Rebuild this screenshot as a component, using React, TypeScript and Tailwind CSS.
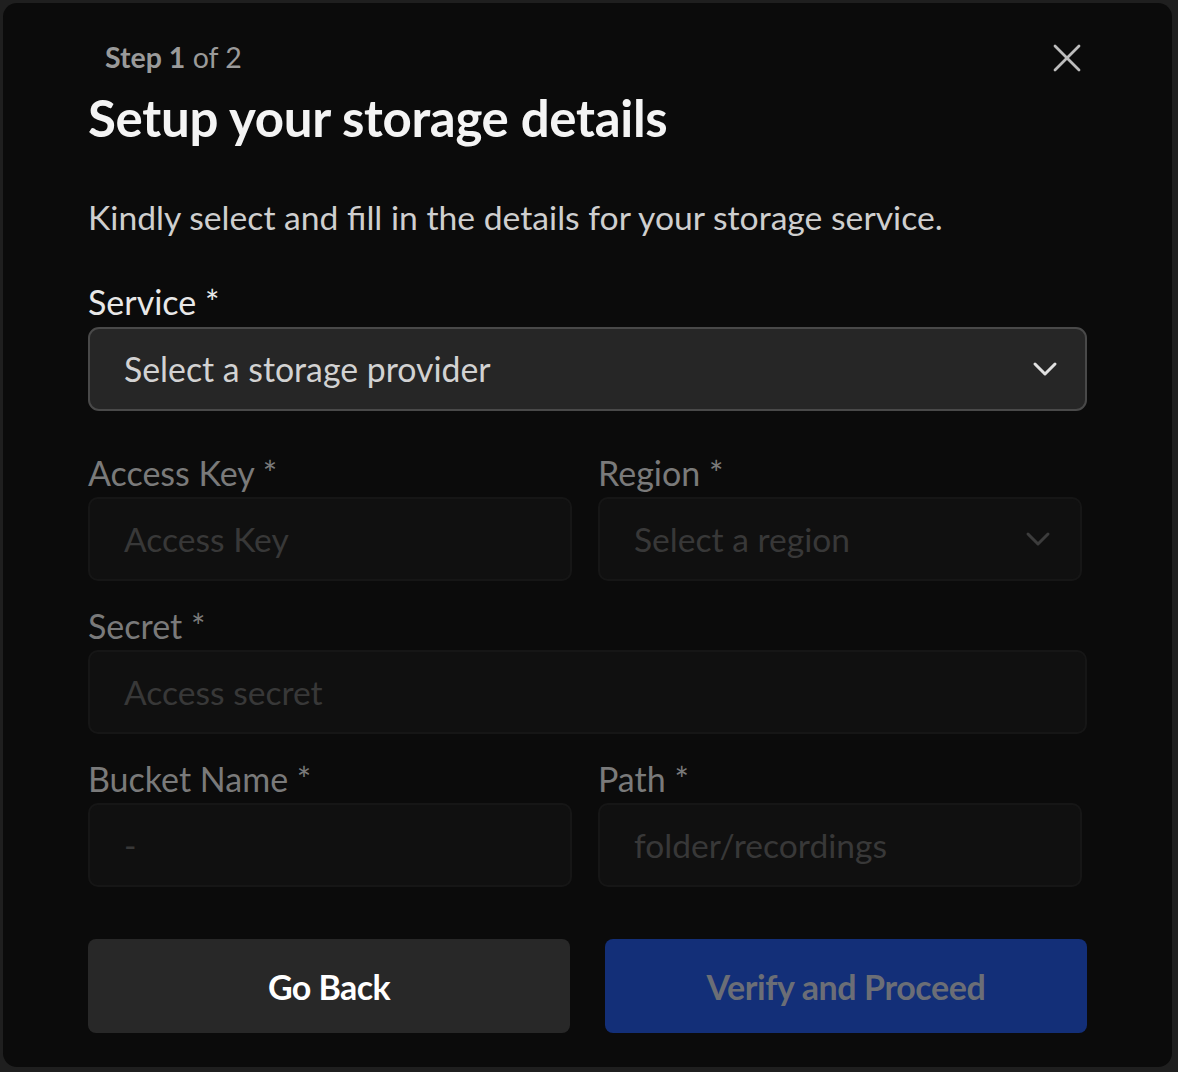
import React from "react";
import { X, ChevronDown } from "lucide-react";

const font = { fontFamily: "Lato, 'Noto Sans', sans-serif" };

function Label({ text }: { text: string }) {
  return (
    <div className="h-[36px] text-[34px] leading-[36px] text-[#7a7a7a]">
      {text} *
    </div>
  );
}

function DisabledInput({ placeholder, chevron }: { placeholder: string; chevron?: boolean }) {
  return (
    <div className="mt-[6px] flex h-[84px] items-center justify-between rounded-[10px] border-2 border-[#161616] bg-[#101010] pl-[34px] pr-[22px] text-[33.6px] text-[#383838]">
      <span>{placeholder}</span>
      {chevron && <ChevronDown size={40} strokeWidth={1.8} color="#3c3c3c" />}
    </div>
  );
}

export default function App() {
  return (
    <div className="min-h-[1072px] w-full bg-[#1f1f1f] p-[3px] pr-[6px]" style={font}>
      <div className="h-[1064px] w-[1169px] rounded-[14px] bg-[#0b0b0b] pl-[85px] pr-[85px] pt-[37px]">
        <div className="flex items-start justify-between">
          <div className="pl-[17px] text-[28.5px] leading-[36px] text-[#9a9a9a] -mt-[1px]">
            <span className="font-bold">Step 1</span> of 2
          </div>
          <button className="-mr-[4px] -mt-[6px] flex h-[48px] w-[48px] items-center justify-center">
            <X size={48} strokeWidth={1.4} color="#bdbdbd" />
          </button>
        </div>
        <h1 className="mt-[7px] text-[51px] font-bold leading-[58px] text-[#f4f4f4] tracking-[-0.3px]">
          Setup your storage details
        </h1>
        <p className="mt-[52px] text-[33.7px] leading-[36px] text-[#cfcfcf]">
          Kindly select and fill in the details for your storage service.
        </p>

        <div className="mt-[49px]">
          <div className="h-[36px] text-[34px] leading-[36px] text-[#e8e8e8]">
            Service *
          </div>
          <div className="mt-[7px] flex h-[84px] w-[999px] items-center justify-between rounded-[11px] border-2 border-[#494949] bg-[#262626] pl-[34px] pr-[20px] text-[33.8px] text-[#d2d2d2]">
            <span>Select a storage provider</span>
            <ChevronDown size={40} strokeWidth={1.8} color="#e0e0e0" />
          </div>
        </div>

        <div className="mt-[44px] grid w-[994px] grid-cols-2 gap-x-[26px] gap-y-[27px]">
          <div>
            <Label text="Access Key" />
            <DisabledInput placeholder="Access Key" />
          </div>
          <div>
            <Label text="Region" />
            <DisabledInput placeholder="Select a region" chevron />
          </div>
          <div className="col-span-2 w-[999px]">
            <Label text="Secret" />
            <DisabledInput placeholder="Access secret" />
          </div>
          <div>
            <Label text="Bucket Name" />
            <DisabledInput placeholder="-" />
          </div>
          <div>
            <Label text="Path" />
            <DisabledInput placeholder="folder/recordings" />
          </div>
        </div>

        <div className="mt-[52px] grid w-[999px] grid-cols-2 gap-x-[35px]">
          <button className="h-[94px] rounded-[8px] bg-[#282828] text-[34px] font-bold tracking-[-0.6px] text-white">
            Go Back
          </button>
          <button className="h-[94px] rounded-[8px] bg-[#132f78] text-[34px] font-bold tracking-[-0.4px] text-[#6b6e76]">
            Verify and Proceed
          </button>
        </div>
      </div>
    </div>
  );
}
